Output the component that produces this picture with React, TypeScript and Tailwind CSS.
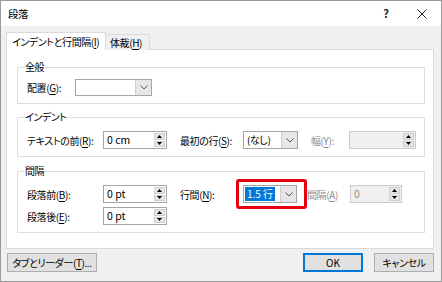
import type { ReactNode } from 'react';

// small bits of the Win10 dialog chrome

function Mn({ k }: { k: string }) {
  return <u className="underline underline-offset-[2px]">{k}</u>;
}

function Chevron() {
  return (
    <svg width="8" height="5" viewBox="0 0 8 5" fill="none">
      <polyline points="0.5,0.5 4,4 7.5,0.5" stroke="#555" strokeWidth="1" />
    </svg>
  );
}

function Spinner() {
  return (
    <div className="flex flex-col w-[12px] h-full py-px pr-px gap-px">
      <div className="flex-1 flex items-center justify-center bg-[#e5e5e5] border border-[#cfcfcf]">
        <svg width="5" height="3" viewBox="0 0 5 3"><polygon points="0,3 2.5,0 5,3" fill="#000" /></svg>
      </div>
      <div className="flex-1 flex items-center justify-center bg-[#e5e5e5] border border-[#cfcfcf]">
        <svg width="5" height="3" viewBox="0 0 5 3"><polygon points="0,0 5,0 2.5,3" fill="#000" /></svg>
      </div>
    </div>
  );
}

function SpinBox({ value, w, disabled }: { value: string; w: string; disabled?: boolean }) {
  return (
    <div
      className={`flex items-center h-[18px] border shrink-0 ${w} ${
        disabled ? 'bg-[#f0f0f0] border-[#cccccc] text-[#8d8d8d]' : 'bg-white border-[#a5a5a5]'
      }`}
    >
      <span className="flex-1 pl-[3px] leading-[16px] whitespace-nowrap tracking-normal text-[10.5px]">{value}</span>
      <Spinner />
    </div>
  );
}

function Combo({ children, w, h = 'h-[18px]' }: { children?: ReactNode; w: string; h?: string }) {
  return (
    <div className={`flex items-stretch shrink-0 ${h} ${w} border border-[#a5a5a5] bg-white`}>
      <div className="flex-1 flex items-center pl-px whitespace-nowrap">{children}</div>
      <div className="w-[16px] flex items-center justify-center bg-[#e6e6e6] border-l border-[#cfcfcf]">
        <Chevron />
      </div>
    </div>
  );
}

function Label({ w, gray, className, children }: { w: string; gray?: boolean; className?: string; children: ReactNode }) {
  return (
    <span className={`${w} shrink-0 whitespace-nowrap ${gray ? 'text-[#8d8d8d]' : ''} ${className ?? ''}`}>
      {children}
    </span>
  );
}

function Group({ title, className, children }: { title: string; className?: string; children: ReactNode }) {
  return (
    <fieldset className={`border border-[#dcdcdc] pl-[9px] pb-[7px] ${className ?? ''}`}>
      <legend className="-ml-[3px] px-[1px] leading-[16px]">{title}</legend>
      {children}
    </fieldset>
  );
}

export default function App() {
  return (
    <div className="w-[442px] h-[282px] border border-[#9b9b9b] bg-[#f0f0f0] flex flex-col text-[10px] tracking-[-0.4px] text-black font-['Noto_Sans_CJK_JP','Noto_Sans',sans-serif] [font-feature-settings:'palt'] overflow-hidden">
      {/* Title bar */}
      <div className="h-[25px] shrink-0 bg-white flex items-center pl-[7px]">
        <span className="leading-[16px] text-[10.5px]">段落</span>
        <div className="flex-1" />
        <span className="w-[10px] text-center font-bold text-[11px] mr-[26px] text-[#222]">?</span>
        <svg width="10" height="10" viewBox="0 0 10 10" className="mr-[14px]">
          <path d="M0.5 0.5 L9.5 9.5 M9.5 0.5 L0.5 9.5" stroke="#222" strokeWidth="1" />
        </svg>
      </div>

      {/* Body */}
      <div className="flex-1 flex flex-col pt-[7px] pl-[5px] pr-[7px] pb-[8px]">
        {/* Tabs */}
        <div className="h-[17px] flex items-end relative z-10 -mb-px">
          <div className="h-[18px] w-[100px] bg-white border border-b-0 border-[#d9d9d9] pl-[5px] flex items-center leading-[16px] whitespace-nowrap">
            インデントと行間隔(<Mn k="I" />)
          </div>
          <div className="h-[16px] w-[44px] bg-[#f0f0f0] border border-l-0 border-b-0 border-[#d9d9d9] pl-[4px] flex items-center leading-[16px] whitespace-nowrap">
            体裁(<Mn k="H" />)
          </div>
        </div>

        {/* Panel */}
        <div className="h-[200px] border border-[#d9d9d9] bg-white pt-[9px] pl-[10px] pr-[8px] flex flex-col">
          <Group title="全般">
            <div className="flex items-center pt-[4px] h-[21px]">
              <Label w="w-[48px]">配置(<Mn k="G" />):</Label>
              <Combo w="w-[77px]" h="h-[17px]" />
            </div>
          </Group>

          <Group title="インデント" className="mt-[5px]">
            <div className="flex items-center pt-[6px]">
              <Label w="w-[76px]">テキストの前(<Mn k="R" />):</Label>
              <SpinBox value="0 cm" w="w-[64px]" />
              <Label w="w-[63px]" className="ml-[13px]">最初の行(<Mn k="S" />):</Label>
              <Combo w="w-[55px]">
                <span className="pl-[2px] leading-[16px]">(なし)</span>
              </Combo>
              <Label w="w-[38px]" gray className="ml-[13px]">幅(<Mn k="Y" />):</Label>
              <SpinBox value="" w="w-[67px]" disabled />
            </div>
          </Group>

          <Group title="間隔" className="mt-[6px]">
            <div className="flex flex-col gap-[4px] pt-[6px]">
              <div className="flex items-center">
                <Label w="w-[76px]">段落前(<Mn k="B" />):</Label>
                <SpinBox value="0 pt" w="w-[64px]" />
                <Label w="w-[63px]" className="ml-[13px]">行間(<Mn k="N" />):</Label>
                <div className="relative shrink-0">
                  <Combo w="w-[54px]">
                    <span className="bg-[#0078d7] text-white px-[2px] leading-[14px] tracking-normal">1.5 行</span>
                  </Combo>
                  <div className="absolute -left-[7px] -right-[10px] -top-[6px] -bottom-[6px] border-[3px] border-[#e8000e] rounded-[3px]" />
                </div>
                <Label w="w-[43px]" gray className="ml-[10px]">間隔(<Mn k="A" />)</Label>
                <SpinBox value="0" w="w-[52px]" disabled />
              </div>
              <div className="flex items-center">
                <Label w="w-[76px]">段落後(<Mn k="E" />):</Label>
                <SpinBox value="0 pt" w="w-[64px]" />
              </div>
            </div>
          </Group>
        </div>

        {/* Buttons */}
        <div className="mt-[4px] flex items-center h-[19px]">
          <button className="ml-px h-[19px] w-[90px] bg-[#e1e1e1] border border-[#adadad] leading-[16px] whitespace-nowrap">
            タブとリーダー(<Mn k="T" />)...
          </button>
          <div className="flex-1" />
          <button className="h-[19px] w-[60px] bg-[#e1e1e1] border-2 border-[#0078d7] leading-[16px] tracking-normal">OK</button>
          <button className="ml-[11px] h-[19px] w-[60px] bg-[#e1e1e1] border border-[#adadad] leading-[16px]">キャンセル</button>
        </div>
      </div>
    </div>
  );
}
